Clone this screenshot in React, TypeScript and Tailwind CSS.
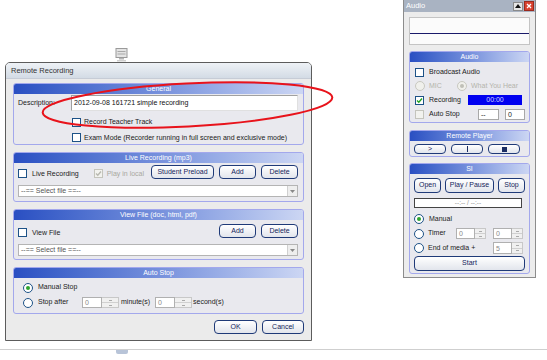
import React from "react";

const font = "font-['Liberation_Sans',Arial,sans-serif]";

function Group({ title, h, children }: { title: string; h: number; children?: React.ReactNode }) {
  return (
    <div
      className="rounded-[3px] border border-[#a3a8ec] bg-[#e9e9ee] overflow-hidden flex flex-col"
      style={{ height: h }}
    >
      <div className="h-[10px] shrink-0 bg-linear-to-r from-[#2a4fc2] via-[#7690dc] to-[#ccd6f3] text-white text-center text-[7px] leading-[10px] whitespace-nowrap">
        {title}
      </div>
      {children}
    </div>
  );
}

function Btn({ w, h = 14, children }: { w: number; h?: number; children: React.ReactNode }) {
  return (
    <div
      className="rounded-[4px] border border-[#1f3a78] bg-linear-to-b from-white to-[#e2e5ec] flex items-center justify-center text-[7px] text-[#14245a] whitespace-nowrap"
      style={{ width: w, height: h }}
    >
      {children}
    </div>
  );
}

function Check({ checked = false, disabled = false }: { checked?: boolean; disabled?: boolean }) {
  return (
    <div
      className={`w-[9px] h-[9px] shrink-0 border ${disabled ? "border-[#c4c4bc] bg-[#f2f2ee]" : "border-[#1d5287] bg-white"} flex items-center justify-center`}
    >
      {checked && (
        <svg width="7" height="7" viewBox="0 0 7 7">
          <path d="M1 3.5 L2.8 5.3 L6 1.5" fill="none" stroke={disabled ? "#b8b8b0" : "#22a322"} strokeWidth="1.4" />
        </svg>
      )}
    </div>
  );
}

function Radio({ checked = false, disabled = false }: { checked?: boolean; disabled?: boolean }) {
  return (
    <div
      className={`w-[10px] h-[10px] shrink-0 rounded-full border ${disabled ? "border-[#c8c8c0] bg-[#f0f0ec]" : "border-[#1d5287] bg-white"} flex items-center justify-center`}
    >
      {checked && <div className={`w-[4px] h-[4px] rounded-full ${disabled ? "bg-[#c0c0b8]" : "bg-[#2fa52f]"}`} />}
    </div>
  );
}

function Select() {
  return (
    <div className="h-[12px] bg-white border border-[#b4b4b4] flex items-center">
      <div className="flex-1 pl-[2px] text-[7px] text-[#555] whitespace-nowrap">--== Select file ==--</div>
      <div className="w-[10px] h-[10px] bg-[#eeeeee] border-l border-[#d0d0d0] flex items-center justify-center">
        <svg width="5" height="3" viewBox="0 0 5 3">
          <path d="M0 0 L5 0 L2.5 3 Z" fill="#888" />
        </svg>
      </div>
    </div>
  );
}

function Spin({ value, w = 20, sw = 17, h = 11 }: { value: string; w?: number; sw?: number; h?: number }) {
  return (
    <div className="flex shrink-0" style={{ height: h }}>
      <div className="bg-white border border-[#b0b0b0] text-[7px] leading-none text-[#888] pl-[2px] flex items-center" style={{ width: w }}>
        {value}
      </div>
      <div className="flex flex-col border border-l-0 border-[#c8c8c8] bg-[#f0f0f0]" style={{ width: sw }}>
        <div className="flex-1 border-b border-[#d0d0d0] flex items-center justify-center">
          <div className="w-[3px] h-[1px] bg-[#aaa]" />
        </div>
        <div className="flex-1 flex items-center justify-center">
          <div className="w-[3px] h-[1px] bg-[#aaa]" />
        </div>
      </div>
    </div>
  );
}

export default function App() {
  return (
    <div className={`relative w-[547px] h-[360px] bg-white overflow-hidden ${font} text-[7px] text-[#1a1a1a] whitespace-nowrap`}>
      {/* top monitor icon */}
      <div className="absolute left-[115px] top-[48px]">
        <svg width="13" height="14" viewBox="0 0 13 14">
          <rect x="1" y="0.5" width="11" height="9" fill="#e4e4e4" stroke="#9a9a9a" />
          <rect x="2.5" y="3" width="8" height="1" fill="#a8a8a8" />
          <rect x="2.5" y="5.5" width="8" height="1" fill="#a8a8a8" />
          <rect x="4" y="10" width="5" height="1.5" fill="#b5b5b5" />
          <rect x="2" y="12" width="9" height="1.5" fill="#cfcfcf" />
        </svg>
      </div>

      {/* bottom page line */}
      <div className="absolute left-0 right-0 top-[349px] h-[1px] bg-[#cfcfcf]" />
      <div className="absolute left-[116px] top-[350px] w-[12px] h-[4px] bg-[#b8c4d8] rounded-b-[2px]" />

      {/* Remote Recording dialog */}
      <div className="absolute left-[5px] top-[62px] w-[307px] h-[279px] border border-[#5c5c5c] rounded-t-[5px] bg-[#ebebeb] flex flex-col overflow-hidden">
        <div className="h-[16px] shrink-0 bg-linear-to-b from-[#eef2f6] to-[#d3dbe5] border-b border-[#c6ccd6] pl-[5px] flex items-center text-[7.5px] text-[#333]">
          Remote Recording
        </div>
        <div className="flex-1 flex flex-col gap-[7px] px-[7px] pt-[4px] bg-[radial-gradient(#dcdcdc_0.6px,transparent_0.6px)] bg-[size:2px_2px] bg-[position:0_250px] bg-no-repeat">
          {/* General */}
          <Group title="General" h={62}>
            <div className="flex items-start pl-[4px] pr-[5px] pt-[1px]">
              <div className="w-[53px] pt-[3px]">Description:</div>
              <div className="flex-1 h-[16px] bg-white border border-[#a0a0a0] border-r-[#e0e0e0] border-b-[#e0e0e0] pl-[2px] pt-[3px] leading-[8px] text-[#111]">
                2012-09-08 161721 simple recording
              </div>
            </div>
            <div className="flex flex-col gap-[5px] pl-[58px] pt-[6px]">
              <div className="flex items-center gap-[3px]">
                <Check />
                <span>Record Teacher Track</span>
              </div>
              <div className="flex items-center gap-[3px]">
                <Check />
                <span>Exam Mode (Recorder running in full screen and exclusive mode)</span>
              </div>
            </div>
          </Group>

          {/* Live recording */}
          <Group title="Live Recording (mp3)" h={50}>
            <div className="flex flex-col gap-[6px] px-[4px] pt-[2px]">
              <div className="flex items-end h-[14px]">
                <div className="flex items-center gap-[5px]">
                  <Check />
                  <span>Live Recording</span>
                </div>
                <div className="flex items-center gap-[4px] ml-[15px] text-[#a8a8a0]">
                  <Check checked disabled />
                  <span>Play in local</span>
                </div>
                <div className="flex-1" />
                <div className="flex gap-[5px] pr-[1px]">
                  <Btn w={63}>Student Preload</Btn>
                  <Btn w={37}>Add</Btn>
                  <Btn w={37}>Delete</Btn>
                </div>
              </div>
              <div className="pr-[1px]">
                <Select />
              </div>
            </div>
          </Group>

          {/* View file */}
          <Group title="View File (doc, html, pdf)" h={51}>
            <div className="flex flex-col gap-[6px] px-[4px] pt-[4px]">
              <div className="flex items-end h-[14px]">
                <div className="flex items-center gap-[5px]">
                  <Check />
                  <span>View File</span>
                </div>
                <div className="flex-1" />
                <div className="flex gap-[5px] pr-[1px]">
                  <Btn w={37}>Add</Btn>
                  <Btn w={37}>Delete</Btn>
                </div>
              </div>
              <div className="pr-[1px]">
                <Select />
              </div>
            </div>
          </Group>

          {/* Auto stop */}
          <Group title="Auto Stop" h={47}>
            <div className="flex flex-col gap-[4px] pl-[9px] pt-[4px]">
              <div className="flex items-center gap-[5px] h-[11px]">
                <Radio checked />
                <span>Manual Stop</span>
              </div>
              <div className="flex items-center h-[11px]">
                <Radio />
                <span className="ml-[5px] w-[44px]">Stop after</span>
                <Spin value="0" />
                <span className="ml-[2px] w-[34px]">minute(s)</span>
                <Spin value="0" />
                <span className="ml-[1px]">second(s)</span>
              </div>
            </div>
          </Group>

          <div className="flex justify-end gap-[5px] -mt-[1px]">
            <Btn w={43}>OK</Btn>
            <Btn w={42}>Cancel</Btn>
          </div>
        </div>
      </div>

      {/* Audio panel */}
      <div className="absolute left-[403px] top-0 w-[133px] h-[278px] border border-[#8c8c8c] border-t-0 bg-[#ececec] flex flex-col">
        <div className="h-[12px] shrink-0 bg-[#a9b3c2] flex items-center pl-[2px] text-white text-[7.5px]">
          <span className="flex-1">Audio</span>
          <div className="w-[10px] h-[9px] bg-[#e6e6e6] border border-[#8a8a8a] flex items-center justify-center mr-[1px]">
            <svg width="6" height="4" viewBox="0 0 6 4">
              <path d="M0 4 L3 0 L6 4 Z" fill="#111" />
            </svg>
          </div>
          <div className="w-[10px] h-[10px] bg-[#d8412f] border border-[#9a2a1e] flex items-center justify-center mr-[1px]">
            <svg width="6" height="6" viewBox="0 0 6 6">
              <path d="M1 1 L5 5 M5 1 L1 5" stroke="white" strokeWidth="1.3" />
            </svg>
          </div>
        </div>
        <div className="flex flex-col px-[5px] pt-[5px]">
          <div className="h-[28px] bg-[#fbfbfb] border border-[#c4c4c4] flex flex-col">
            <div className="h-[15px]" />
            <div className="h-[1px] bg-[#1a1a6a]" />
          </div>

          <div className="mt-[6px]">
            <Group title="Audio" h={72}>
              <div className="flex flex-col pl-[5px] pt-[6px] gap-[4px]">
                <div className="flex items-center gap-[5px] h-[9px]">
                  <Check />
                  <span>Broadcast Audio</span>
                </div>
                <div className="flex items-center h-[10px] text-[#b4b4ac]">
                  <Radio disabled />
                  <span className="ml-[4px] w-[28px]">MIC</span>
                  <Radio checked disabled />
                  <span className="ml-[4px]">What You Hear</span>
                </div>
                <div className="flex items-center h-[10px]">
                  <Check checked />
                  <span className="ml-[5px] w-[39px]">Recording</span>
                  <div className="w-[54px] h-[10px] bg-[#0000f0] text-[#d0d8ff] leading-[10px] text-center">00:00</div>
                </div>
                <div className="flex items-center h-[11px]">
                  <Check disabled />
                  <span className="ml-[5px] w-[49px]">Auto Stop</span>
                  <div className="w-[21px] h-[11px] bg-white border border-[#a8a8a8] pl-[2px] leading-[9px]">--</div>
                  <div className="w-[20px] h-[11px] ml-[6px] bg-white border border-[#a8a8a8] pl-[2px] leading-[9px]">0</div>
                </div>
              </div>
            </Group>
          </div>

          <div className="mt-[7px]">
            <Group title="Remote Player" h={27}>
              <div className="flex gap-[5px] pl-[4px] pt-[3px]">
                <Btn w={32} h={10}>
                  <span className="text-[7px]">&gt;</span>
                </Btn>
                <Btn w={32} h={10}>
                  <div className="w-[1px] h-[6px] bg-[#1b2d63]" />
                </Btn>
                <Btn w={32} h={10}>
                  <div className="w-[5px] h-[5px] bg-[#1b2d63]" />
                </Btn>
              </div>
            </Group>
          </div>

          <div className="mt-[6px]">
            <Group title="SI" h={111}>
              <div className="flex flex-col pl-[4px] pr-[4px] pt-[4px]">
                <div className="flex gap-[4px]">
                  <Btn w={27} h={15}>Open</Btn>
                  <Btn w={49} h={15}>Play / Pause</Btn>
                  <Btn w={27} h={15}>Stop</Btn>
                </div>
                <div className="mt-[5px] w-[108px] h-[10px] bg-white border border-[#444] text-center text-[6.5px] leading-[8px] text-[#999]">
                  --:-- / --:--
                </div>
                <div className="flex items-center gap-[5px] h-[10px] mt-[6px]">
                  <Radio checked />
                  <span>Manual</span>
                </div>
                <div className="flex items-center h-[11px] mt-[4px]">
                  <Radio />
                  <span className="ml-[4px] w-[28px]">Timer</span>
                  <Spin value="0" w={19} sw={11} />
                  <div className="w-[7px]" />
                  <Spin value="0" w={19} sw={11} />
                </div>
                <div className="flex items-center h-[12px] mt-[3px]">
                  <Radio />
                  <span className="ml-[4px] w-[65px]">End of media +</span>
                  <Spin value="5" w={19} sw={11} h={12} />
                </div>
                <div className="mt-[2px]">
                  <Btn w={111} h={15}>Start</Btn>
                </div>
              </div>
            </Group>
          </div>
        </div>
      </div>

      {/* red annotation ellipse */}
      <svg className="absolute left-0 top-0 pointer-events-none" width="547" height="360" viewBox="0 0 547 360">
        <ellipse cx="187.5" cy="105" rx="145" ry="21.5" transform="rotate(-3 187.5 105)" fill="none" stroke="#e8131b" strokeWidth="2" />
      </svg>
    </div>
  );
}
